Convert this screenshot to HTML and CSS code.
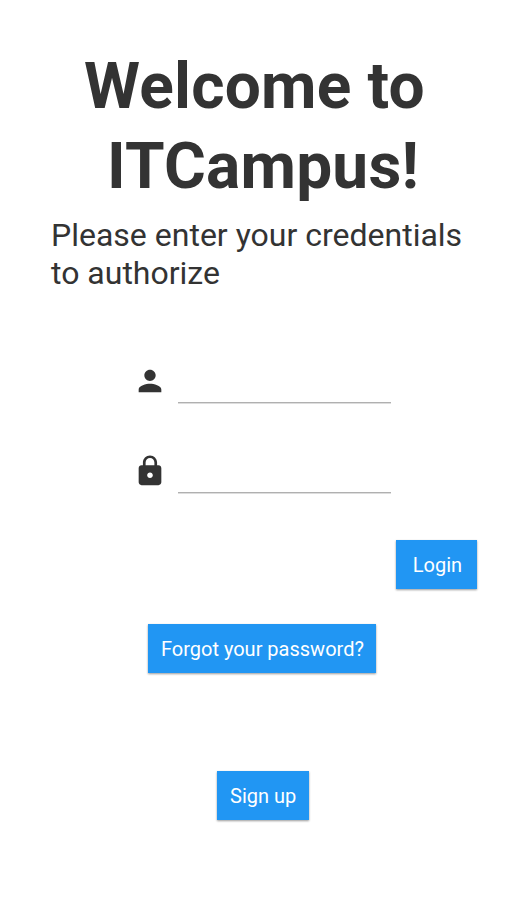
FILE: index.html
```html
<!DOCTYPE html>
<html lang="en">
<head>
<meta charset="utf-8">
<title>ITCampus</title>
<link rel="stylesheet" href="styles.css">
</head>
<body>
<main class="screen">
  <h1 class="title"><span class="line first">Welcome to</span><span class="line second">ITCampus!</span></h1>
  <p class="intro">Please enter your credentials<br>to authorize</p>
  <form class="form">
    <label class="field">
      <svg class="icon" viewBox="0 0 24 24"><path d="M12 12c2.21 0 4-1.79 4-4s-1.79-4-4-4-4 1.79-4 4 1.79 4 4 4zm0 2c-2.67 0-8 1.34-8 4v2h16v-2c0-2.66-5.33-4-8-4z"/></svg>
      <input class="input" type="text" aria-label="Username">
    </label>
    <label class="field">
      <svg class="icon" viewBox="0 0 24 24"><path d="M18 8h-1V6c0-2.76-2.24-5-5-5S7 3.240 7 6v2H6c-1.100 0-2 .9-2 2v10c0 1.100.9 2 2 2h12c1.100 0 2-.9 2-2V10c0-1.100-.9-2-2-2zm-6 9c-1.100 0-2-.9-2-2s.9-2 2-2 2 .9 2 2-.9 2-2 2zm3.100-9H8.900V6c0-1.710 1.390-3.100 3.100-3.100s3.100 1.390 3.100 3.100v2z"/></svg>
      <input class="input" type="password" aria-label="Password">
    </label>
    <button class="button login" type="button">Login</button>
    <button class="button forgot" type="button">Forgot your password?</button>
    <button class="button signup" type="button">Sign up</button>
  </form>
</main>
</body>
</html>
```
FILE: styles.css
```css
* { box-sizing: border-box; }
body { margin: 0; background: #fff; color: #333; font-family: Roboto, sans-serif; }
.screen { height: 900px; padding-top: 47px; overflow: hidden; }
.title { margin: 0; font-size: 64px; line-height: 80px; font-weight: 700; letter-spacing: .2px; }
.line { display: block; white-space: nowrap; }
.first { margin-left: 84px; }
.second { margin-left: 107px; }
.intro { margin: 9px 0 0 51px; font-size: 32px; line-height: 38px; white-space: nowrap; }
.form { display: flex; flex-direction: column; margin-top: 63px; }
.field { display: flex; height: 90px; padding-left: 133px; }
.icon { width: 34px; height: 34px; margin-top: 9px; fill: #333; flex: none; }
.input { width: 213px; height: 48px; margin-left: 11.4px; padding: 0; border: 0; border-bottom: 1px solid #b0b0b0; box-shadow: 0 1px 0 #ddd; outline: 0; background: transparent; font: 20px Roboto, sans-serif; }
.button { height: 49px; padding: 0; border: 0; background: #2196f3; color: #fff; font: 20px Roboto, sans-serif; box-shadow: 0 1px 2px rgba(0,0,0,.4); }
.login { width: 81px; margin: 5px 0 0 396px; padding-left: 2px; }
.forgot { width: 228px; margin: 35px 0 0 148.4px; }
.signup { width: 91.500px; margin: 98px 0 0 217.400px; }
```
